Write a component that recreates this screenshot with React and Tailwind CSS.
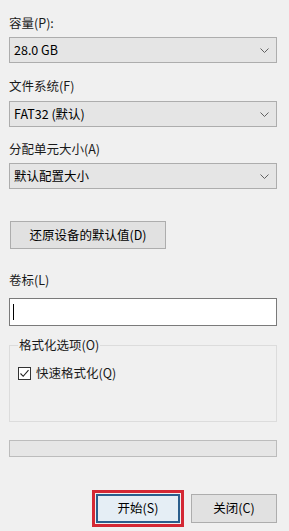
import React from "react";

const Chevron = () => (
  <svg width="9" height="5" viewBox="0 0 9 5" className="mr-[7px]">
    <path d="M0.5 0.5 L4.5 4.5 L8.5 0.5" fill="none" stroke="#606060" strokeWidth="1" />
  </svg>
);

const Combo = ({ value }) => (
  <div className="flex h-[26px] items-center justify-between border border-[#adadad] bg-[#e5e5e5] pl-[4px]">
    <span className="text-[12.5px] text-black">{value}</span>
    <Chevron />
  </div>
);

const Label = ({ children, className = "" }) => (
  <div className={"h-[16px] text-[12.5px] leading-[16px] text-[#1a1a1a] " + className}>{children}</div>
);

export default function App() {
  return (
    <div
      className="flex h-[531px] w-[289px] flex-col bg-[#f0f0f0] pl-[9px] pr-[12px]"
      style={{ fontFamily: '"Noto Sans CJK SC", "Microsoft YaHei", sans-serif' }}
    >
      <Label className="mt-[15px]">容量(P):</Label>
      <div className="mt-[6px]">
        <Combo value="28.0 GB" />
      </div>
      <Label className="mt-[15px]">文件系统(F)</Label>
      <div className="mt-[7px]">
        <Combo value="FAT32 (默认)" />
      </div>
      <Label className="mt-[14px]">分配单元大小(A)</Label>
      <div className="mt-[6px]">
        <Combo value="默认配置大小" />
      </div>

      <button className="ml-[1px] mt-[32px] h-[28px] w-[156px] border border-[#adadad] bg-[#e1e1e1] text-[12.5px] text-black">
        还原设备的默认值(D)
      </button>

      <Label className="mt-[23px]">卷标(L)</Label>
      <div className="mt-[10px] flex h-[28px] items-center border border-[#7a7a7a] bg-white pl-[3px]">
        <div className="h-[16px] w-[1px] bg-black" />
      </div>

      <fieldset className="mt-[11px] h-[85px] border border-[#dcdcdc] px-[8px] pt-[14px]">
        <legend className="px-[1px] text-[12.5px] leading-[16px] text-[#1a1a1a]">格式化选项(O)</legend>
        <div className="-mt-[3px] flex items-center">
          <div className="flex h-[13px] w-[13px] items-center justify-center border border-[#333] bg-white">
            <svg width="11" height="11" viewBox="0 0 11 11">
              <path d="M1.5 5.5 L4.2 8.3 L9.5 2.2" fill="none" stroke="#222" strokeWidth="1.1" />
            </svg>
          </div>
          <span className="ml-[5px] text-[12.5px] text-[#1a1a1a]">快速格式化(Q)</span>
        </div>
      </fieldset>

      <div className="mt-[18px] h-[17px] border border-[#bcbcbc] bg-[#e6e6e6]" />

      <div className="mt-[33px] flex items-center justify-end">
        <div className="border-[3px] border-[#d42834] p-[1px]">
          <button className="h-[29px] w-[84px] border-2 border-[#2b5e8c] bg-[#e5eef5] text-[12.5px] text-black">
            开始(S)
          </button>
        </div>
        <button className="ml-[7px] h-[29px] w-[86px] border border-[#adadad] bg-[#e1e1e1] text-[12.5px] text-black">
          关闭(C)
        </button>
      </div>
    </div>
  );
}
